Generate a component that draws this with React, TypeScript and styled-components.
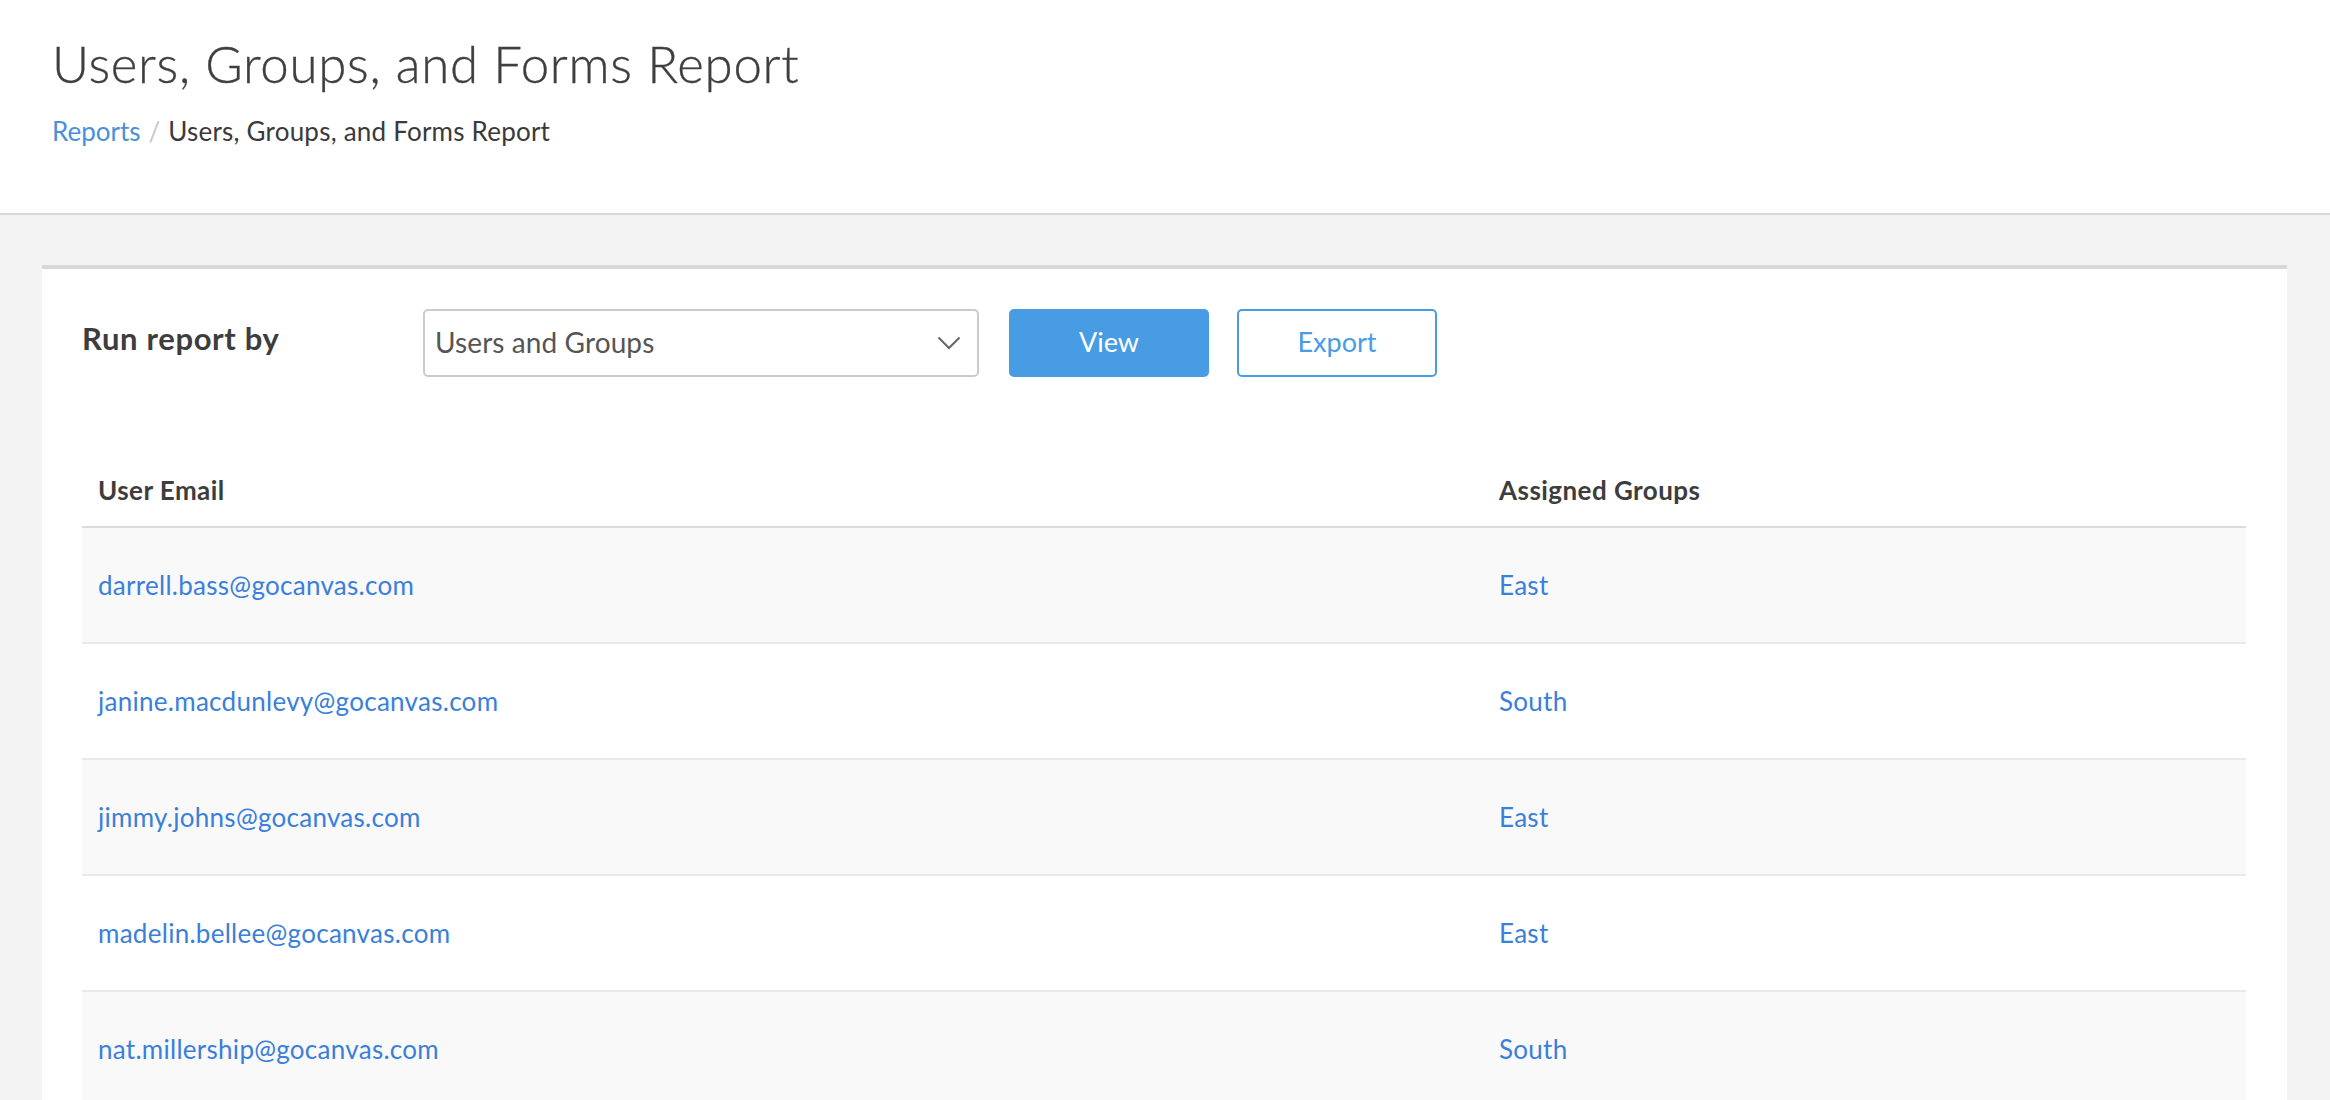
import styled, { createGlobalStyle } from "styled-components";

const rows = [
  { email: "darrell.bass@gocanvas.com", group: "East" },
  { email: "janine.macdunlevy@gocanvas.com", group: "South" },
  { email: "jimmy.johns@gocanvas.com", group: "East" },
  { email: "madelin.bellee@gocanvas.com", group: "East" },
  { email: "nat.millership@gocanvas.com", group: "South" },
];

function App() {
  return (
    <Page>
      <GlobalStyle />
      <Header>
        <Title>Users, Groups, and Forms Report</Title>
        <Breadcrumb>
          <Crumb href="#">Reports</Crumb>
          <Slash>/</Slash>
          <CurrentCrumb>Users, Groups, and Forms Report</CurrentCrumb>
        </Breadcrumb>
      </Header>
      <Main>
        <Card>
          <Toolbar>
            <RunLabel>Run report by</RunLabel>
            <Select>
              <SelectValue>Users and Groups</SelectValue>
              <svg width="24" height="14" viewBox="0 0 24 14" fill="none">
                <polyline points="1.5,1.5 12,12 22.5,1.5" stroke="#666" strokeWidth="2" />
              </svg>
            </Select>
            <ViewButton>View</ViewButton>
            <ExportButton>Export</ExportButton>
          </Toolbar>
          <Table>
            <thead>
              <tr>
                <HeadCell>User Email</HeadCell>
                <HeadCell>Assigned Groups</HeadCell>
              </tr>
            </thead>
            <tbody>
              {rows.map((row, i) => (
                <Row key={i} $striped={i % 2 === 0}>
                  <Cell>
                    <CellLink href="#">{row.email}</CellLink>
                  </Cell>
                  <Cell>
                    <CellLink href="#">{row.group}</CellLink>
                  </Cell>
                </Row>
              ))}
            </tbody>
          </Table>
        </Card>
      </Main>
    </Page>
  );
}

export default App;

const GlobalStyle = createGlobalStyle`
  html, body {
    margin: 0;
    padding: 0;
    height: 100%;
    overflow: hidden;
    background: #f3f3f3;
  }
  body {
    font-family: Lato, "Open Sans", sans-serif;
    color: #3d3d3d;
  }
`;

const Page = styled.div`
  height: 1100px;
  overflow: hidden;
  display: flex;
  flex-direction: column;
`;

const Header = styled.header`
  flex: none;
  box-sizing: border-box;
  height: 215px;
  padding: 35px 0 0 52px;
  background: #fff;
  border-bottom: 2px solid #d6d9db;
`;

const Title = styled.h1`
  margin: 0;
  font-size: 51px;
  line-height: 58px;
  font-weight: 300;
  letter-spacing: 0.7px;
  -webkit-text-stroke: 0.35px #3f3f3f;
  color: #3f3f3f;
`;

const Breadcrumb = styled.nav`
  display: flex;
  align-items: baseline;
  margin-top: 22px;
  font-size: 26px;
  line-height: 32px;
  color: #3a3a3a;
`;

const Crumb = styled.a`
  color: #4a90d9;
  text-decoration: none;
`;

const Slash = styled.span`
  margin: 0 8px;
  color: #c8c8c8;
`;

const CurrentCrumb = styled.span`
  letter-spacing: 0.22px;
`;

const Main = styled.main`
  flex: 1;
  padding: 50px 43px 0 42px;
`;

const Card = styled.section`
  background: #fff;
  border-top: 4px solid #d6d9db;
  padding: 40px 41px 0 40px;
`;

const Toolbar = styled.div`
  display: flex;
  align-items: center;
  height: 68px;
`;

const RunLabel = styled.div`
  width: 342px;
  margin-top: -10px;
  font-size: 31px;
  font-weight: 700;
  letter-spacing: 0.65px;
  color: #3d3d3d;
`;

const Select = styled.div`
  box-sizing: border-box;
  width: 556px;
  margin-left: -1px;
  height: 68px;
  display: flex;
  align-items: center;
  justify-content: space-between;
  padding: 0 16px 0 10px;
  border: 2px solid #cbcbcb;
  border-radius: 5px;
`;

const SelectValue = styled.span`
  margin-top: -3px;
  font-size: 28px;
  letter-spacing: 0.1px;
  color: #555;
`;

const ViewButton = styled.button`
  box-sizing: border-box;
  width: 200px;
  height: 68px;
  margin-left: 30px;
  padding: 0 0 3px;
  border: none;
  border-radius: 5px;
  background: #489ce4;
  color: #fff;
  font: inherit;
  font-size: 27px;
`;

const ExportButton = styled.button`
  box-sizing: border-box;
  width: 200px;
  height: 68px;
  margin-left: 28px;
  padding: 0 0 3px;
  border: 2px solid #489ce4;
  border-radius: 5px;
  background: #fff;
  color: #489ce4;
  font: inherit;
  font-size: 27px;
`;

const Table = styled.table`
  width: 100%;
  margin-top: 77px;
  border-collapse: collapse;
  table-layout: fixed;
`;

const HeadCell = styled.th`
  box-sizing: border-box;
  height: 73px;
  padding: 0 16px;
  text-align: left;
  font-size: 26px;
  font-weight: 700;
  letter-spacing: 0.45px;
  color: #3d3d3d;
  border-bottom: 2px solid #dcdcdc;

  &:first-child {
    width: 1401px;
  }
`;

const Row = styled.tr<{ $striped: boolean }>`
  height: 116px;
  background: ${(props) => (props.$striped ? "#f9f9f9" : "#fff")};
  border-bottom: 2px solid #e9e9e9;
`;

const Cell = styled.td`
  padding: 0 16px;
  font-size: 26px;
  letter-spacing: 0.28px;
`;

const CellLink = styled.a`
  color: #3a7fd9;
  text-decoration: none;
`;
